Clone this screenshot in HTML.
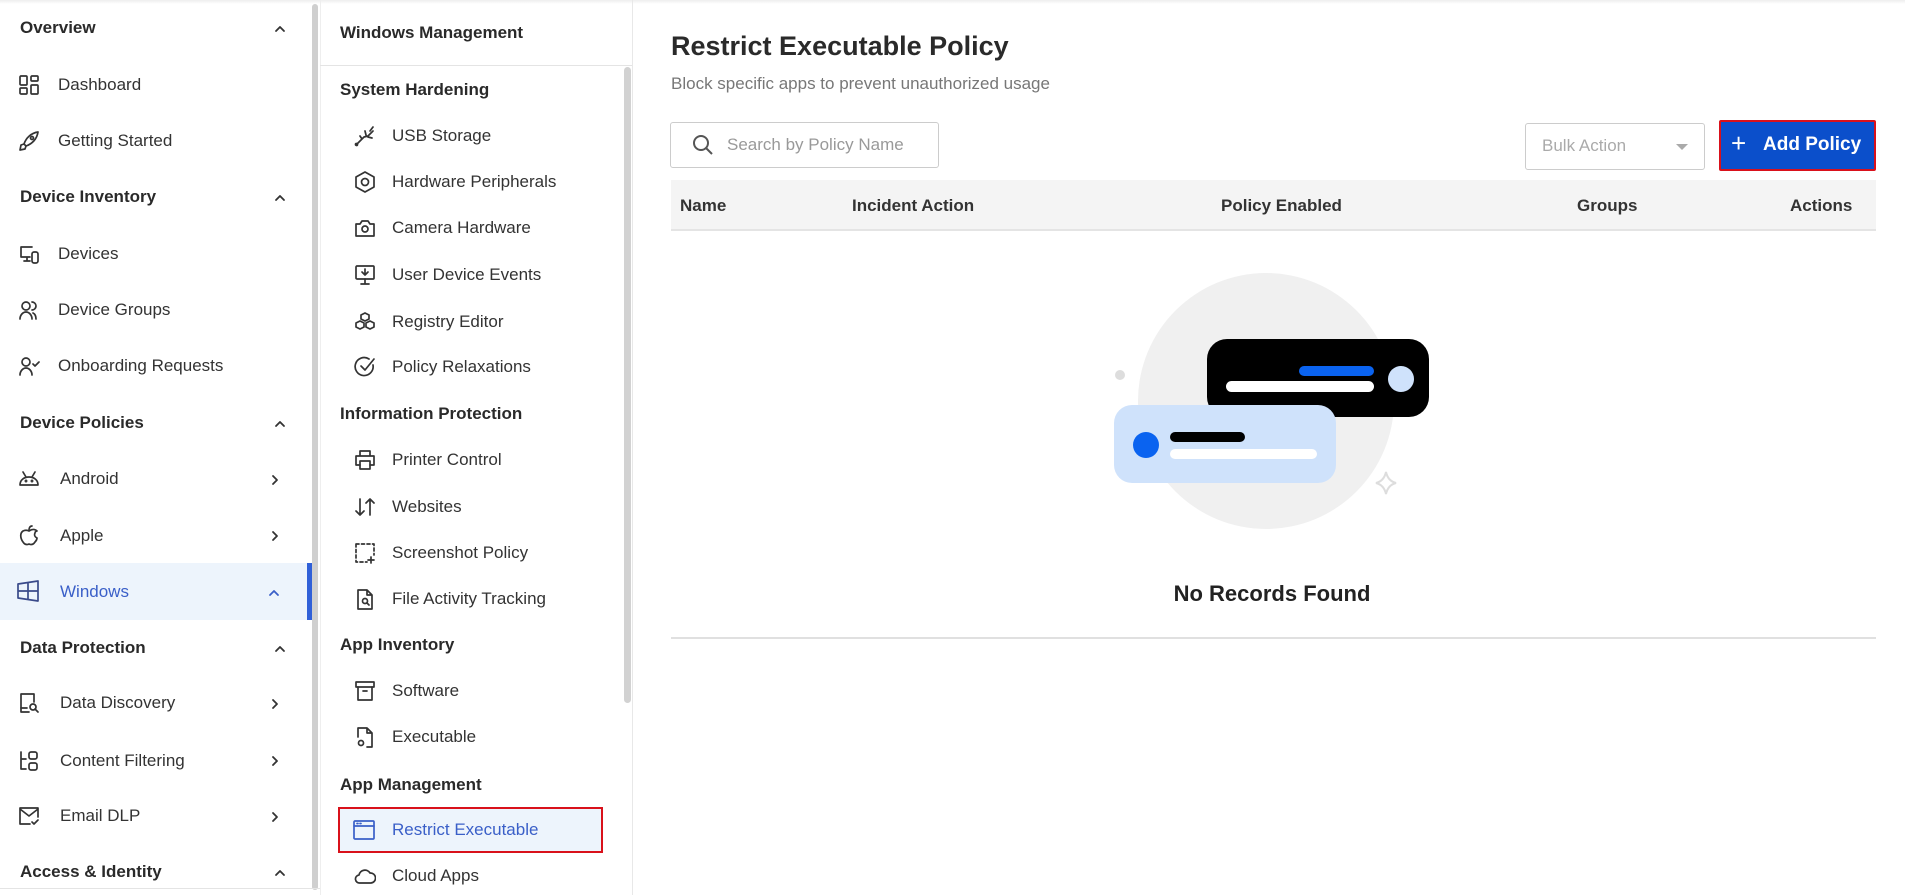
<!DOCTYPE html>
<html><head><meta charset="utf-8"><style>
*{margin:0;padding:0;box-sizing:border-box}
body{width:1905px;height:895px;overflow:hidden;background:#fff;font-family:"Liberation Sans",sans-serif;color:#222;position:relative}
.a{position:absolute;white-space:nowrap}
.sec{font-size:17px;font-weight:bold;color:#2a2a2a}
.it{font-size:17px;color:#333}
.ic{position:absolute;width:22px;height:22px}
.ic svg{width:22px;height:22px;fill:none;stroke:#333;stroke-width:1.7;stroke-linecap:round;stroke-linejoin:round}
.chev{position:absolute;width:12px;height:12px}
.chev svg{width:12px;height:12px;fill:none;stroke:#333;stroke-width:1.8;stroke-linecap:round;stroke-linejoin:round}
.th{position:absolute;top:196px;font-size:17px;font-weight:bold;color:#333}
</style></head><body>
<div class="a" style="left:0;top:0;width:1905px;height:4px;background:linear-gradient(#eee,#fff)"></div>
<!-- left sidebar -->
<div class="a" style="left:312px;top:4px;width:6px;height:886px;background:#cfcfcf;border-radius:3px"></div>
<div class="a" style="left:0;top:563px;width:312px;height:57px;background:#edf4fc"></div>
<div class="a" style="left:307px;top:563px;width:5px;height:57px;background:#3060d8"></div>
<div class="a" style="left:0;top:888px;width:320px;height:1px;background:#e4e4e4"></div>

<div class="a sec" style="left:20px;top:18px">Overview</div>
<div class="chev" style="left:274px;top:22px"><svg viewBox="0 0 12 12"><path d="M2 8L6 4L10 8"/></svg></div>
<div class="ic" style="left:18px;top:74px"><svg viewBox="0 0 22 22"><rect x="2" y="2" width="7" height="9" rx="1"/><rect x="13" y="2" width="7" height="5" rx="1"/><rect x="2" y="14" width="7" height="6" rx="1"/><rect x="13" y="11" width="7" height="9" rx="1"/></svg></div>
<div class="a it" style="left:58px;top:75px">Dashboard</div>
<div class="ic" style="left:18px;top:130px"><svg viewBox="0 0 22 22"><path d="M20 2C13 3 8 8 6 14l2 2c6-2 11-7 12-14z"/><path d="M6 14l-3 1-1 5 5-1 1-3"/><circle cx="14" cy="8" r="1.5"/></svg></div>
<div class="a it" style="left:58px;top:131px">Getting Started</div>
<div class="a sec" style="left:20px;top:187px">Device Inventory</div>
<div class="chev" style="left:274px;top:191px"><svg viewBox="0 0 12 12"><path d="M2 8L6 4L10 8"/></svg></div>
<div class="ic" style="left:18px;top:243px"><svg viewBox="0 0 22 22"><path d="M14 4H3v10h9M6 18h6M9 14v4"/><rect x="14" y="9" width="6" height="11" rx="2"/></svg></div>
<div class="a it" style="left:58px;top:244px">Devices</div>
<div class="ic" style="left:18px;top:299px"><svg viewBox="0 0 22 22"><circle cx="8" cy="7" r="4"/><path d="M2 20c0-4 3-7 6-7s6 3 6 7M14 3a4 4 0 010 8M18 20c0-3-1-5-3-6"/></svg></div>
<div class="a it" style="left:58px;top:300px">Device Groups</div>
<div class="ic" style="left:18px;top:355px"><svg viewBox="0 0 22 22"><circle cx="8" cy="7" r="4"/><path d="M2 20c0-4 3-7 6-7s6 3 6 7M15 9l2 2 4-4"/></svg></div>
<div class="a it" style="left:58px;top:356px">Onboarding Requests</div>
<div class="a sec" style="left:20px;top:413px">Device Policies</div>
<div class="chev" style="left:274px;top:417px"><svg viewBox="0 0 12 12"><path d="M2 8L6 4L10 8"/></svg></div>
<div class="ic" style="left:18px;top:468px"><svg viewBox="0 0 22 22"><path d="M2 17c0-5 4-8 9-8s9 3 9 8zM5 4l3 5M17 4l-3 5"/><circle cx="8" cy="13" r=".6"/><circle cx="14" cy="13" r=".6"/></svg></div>
<div class="a it" style="left:60px;top:469px">Android</div>
<div class="chev" style="left:269px;top:473px"><svg viewBox="0 0 12 12"><path d="M4 2L8 6L4 10"/></svg></div>
<div class="ic" style="left:18px;top:524px"><svg viewBox="0 0 22 22"><path d="M11 7c-2-1-4-1-6 0-3 2-3 7 0 11 2 3 4 3 6 2 2 1 4 1 6-2 1-1 2-3 2-4-2-1-3-3-2-5 0-1 1-2 2-2-2-2-5-2-8 0z"/><path d="M11 6c0-2 1-4 3-4"/></svg></div>
<div class="a it" style="left:60px;top:526px">Apple</div>
<div class="chev" style="left:269px;top:529px"><svg viewBox="0 0 12 12"><path d="M4 2L8 6L4 10"/></svg></div>
<div class="ic" style="left:17px;top:580px"><svg viewBox="0 0 22 22" style="stroke:#3a4a8a"><path d="M1 4l20-3v20L1 18zM11 2.5v17M1 11h20"/></svg></div>
<div class="a it" style="left:60px;top:582px;color:#3a5fc8">Windows</div>
<div class="chev" style="left:268px;top:586px"><svg viewBox="0 0 12 12" style="stroke:#3a5fc8"><path d="M2 8L6 4L10 8"/></svg></div>
<div class="a sec" style="left:20px;top:638px">Data Protection</div>
<div class="chev" style="left:274px;top:642px"><svg viewBox="0 0 12 12"><path d="M2 8L6 4L10 8"/></svg></div>
<div class="ic" style="left:18px;top:692px"><svg viewBox="0 0 22 22"><path d="M11 20H3V2h13v8"/><circle cx="15" cy="15" r="3"/><path d="M17 17l3 3M3 16h6"/></svg></div>
<div class="a it" style="left:60px;top:693px">Data Discovery</div>
<div class="chev" style="left:269px;top:697px"><svg viewBox="0 0 12 12"><path d="M4 2L8 6L4 10"/></svg></div>
<div class="ic" style="left:18px;top:750px"><svg viewBox="0 0 22 22"><path d="M3 2v17h5M3 9h5"/><rect x="11" y="2" width="8" height="7" rx="2"/><rect x="11" y="13" width="8" height="7" rx="2"/></svg></div>
<div class="a it" style="left:60px;top:751px">Content Filtering</div>
<div class="chev" style="left:269px;top:754px"><svg viewBox="0 0 12 12"><path d="M4 2L8 6L4 10"/></svg></div>
<div class="ic" style="left:18px;top:805px"><svg viewBox="0 0 22 22"><path d="M12 19H2V3h18v9M2 4l9 7 9-7M14 17l2 2 4-4"/></svg></div>
<div class="a it" style="left:60px;top:806px">Email DLP</div>
<div class="chev" style="left:269px;top:810px"><svg viewBox="0 0 12 12"><path d="M4 2L8 6L4 10"/></svg></div>
<div class="a sec" style="left:20px;top:862px">Access &amp; Identity</div>
<div class="chev" style="left:274px;top:866px"><svg viewBox="0 0 12 12"><path d="M2 8L6 4L10 8"/></svg></div>

<!-- second panel -->
<div class="a" style="left:320px;top:0;width:1px;height:895px;background:#eee"></div>
<div class="a" style="left:632px;top:0;width:1px;height:895px;background:#e8e8e8"></div>
<div class="a" style="left:320px;top:65px;width:312px;height:1px;background:#e4e4e4"></div>
<div class="a" style="left:624px;top:67px;width:7px;height:636px;background:#d2d2d2;border-radius:4px"></div>
<div class="a sec" style="left:340px;top:23px">Windows Management</div>
<div class="a sec" style="left:340px;top:80px">System Hardening</div>
<div class="ic" style="left:354px;top:125px"><svg viewBox="0 0 22 22"><path d="M2 20l8-8 4-1 5-5M8 14l-2-3M12 10l-1-4M16 6l3-4M14 12l4 1"/><circle cx="2.5" cy="19.5" r="1"/></svg></div>
<div class="a it" style="left:392px;top:126px">USB Storage</div>
<div class="ic" style="left:354px;top:171px"><svg viewBox="0 0 22 22"><path d="M11 1l9 5v10l-9 5-9-5V6z"/><circle cx="11" cy="11" r="3.5"/></svg></div>
<div class="a it" style="left:392px;top:172px">Hardware Peripherals</div>
<div class="ic" style="left:354px;top:217px"><svg viewBox="0 0 22 22"><path d="M2 7h4l2-3h6l2 3h4v12H2z"/><circle cx="11" cy="12" r="3"/></svg></div>
<div class="a it" style="left:392px;top:218px">Camera Hardware</div>
<div class="ic" style="left:354px;top:264px"><svg viewBox="0 0 22 22"><rect x="2" y="2" width="18" height="13" rx="1"/><path d="M11 5v6M8 8l3 3 3-3M11 15v5M7 20h8"/></svg></div>
<div class="a it" style="left:392px;top:265px">User Device Events</div>
<div class="ic" style="left:354px;top:311px"><svg viewBox="0 0 22 22"><path d="M11 2l4 2v4l-4 2-4-2V4zM6 10l4 2v4l-4 2-4-2v-4zM16 10l4 2v4l-4 2-4-2v-4z"/></svg></div>
<div class="a it" style="left:392px;top:312px">Registry Editor</div>
<div class="ic" style="left:354px;top:356px"><svg viewBox="0 0 22 22"><path d="M19 9a9 9 0 11-4-6"/><path d="M7 10l4 4 9-11"/></svg></div>
<div class="a it" style="left:392px;top:357px">Policy Relaxations</div>
<div class="a sec" style="left:340px;top:404px">Information Protection</div>
<div class="ic" style="left:354px;top:449px"><svg viewBox="0 0 22 22"><path d="M6 7V2h10v5M6 16H2V7h18v9h-4"/><rect x="6" y="12" width="10" height="8"/></svg></div>
<div class="a it" style="left:392px;top:450px">Printer Control</div>
<div class="ic" style="left:354px;top:496px"><svg viewBox="0 0 22 22"><path d="M6 3v16M2 15l4 4 4-4M16 19V3M12 7l4-4 4 4"/></svg></div>
<div class="a it" style="left:392px;top:497px">Websites</div>
<div class="ic" style="left:354px;top:542px"><svg viewBox="0 0 22 22" style="stroke-dasharray:3 2.5"><path d="M2 2h18v11M2 2v18h11"/></svg><svg viewBox="0 0 22 22" style="position:absolute;left:0;top:0"><path d="M17 15v6M14 18h6"/></svg></div>
<div class="a it" style="left:392px;top:543px">Screenshot Policy</div>
<div class="ic" style="left:354px;top:588px"><svg viewBox="0 0 22 22"><path d="M13 2H4v19h14V7zM13 2v5h5"/><circle cx="11" cy="13" r="2.5"/><path d="M13 15l2 2"/></svg></div>
<div class="a it" style="left:392px;top:589px">File Activity Tracking</div>
<div class="a sec" style="left:340px;top:635px">App Inventory</div>
<div class="ic" style="left:354px;top:680px"><svg viewBox="0 0 22 22"><rect x="2" y="2" width="18" height="5"/><path d="M4 7v13h14V7M9 11h4"/></svg></div>
<div class="a it" style="left:392px;top:681px">Software</div>
<div class="ic" style="left:354px;top:726px"><svg viewBox="0 0 22 22"><path d="M4 11V2h9l5 5v14h-5M13 2v5h5"/><circle cx="7" cy="17" r="2.5"/></svg></div>
<div class="a it" style="left:392px;top:727px">Executable</div>
<div class="a sec" style="left:340px;top:775px">App Management</div>
<div class="a" style="left:338px;top:807px;width:265px;height:46px;background:#edf4fc;border:2px solid #d9111b"></div>
<div class="ic" style="left:353px;top:819px"><svg viewBox="0 0 22 22" style="stroke:#3a5fc8"><rect x="1" y="2" width="20" height="18" rx="1"/><path d="M1 7h20M4 4.5h1M7 4.5h1"/></svg></div>
<div class="a it" style="left:392px;top:820px;color:#3a5fc8">Restrict Executable</div>
<div class="ic" style="left:354px;top:865px"><svg viewBox="0 0 22 22"><path d="M6 18a4 4 0 01-1-8 6 6 0 0111-2 5 5 0 011 10z"/></svg></div>
<div class="a it" style="left:392px;top:866px">Cloud Apps</div>

<!-- main -->
<div class="a" style="left:671px;top:31px;font-size:27px;font-weight:bold;color:#2a2a2a">Restrict Executable Policy</div>
<div class="a" style="left:671px;top:74px;font-size:17px;color:#777">Block specific apps to prevent unauthorized usage</div>
<div class="a" style="left:670px;top:122px;width:269px;height:46px;border:1px solid #ccc;border-radius:3px"></div>
<svg class="a" style="left:690px;top:132px" width="26" height="26" viewBox="0 0 26 26" fill="none" stroke="#555" stroke-width="2"><circle cx="11" cy="11" r="7"/><path d="M16 16l6 6"/></svg>
<div class="a" style="left:727px;top:135px;font-size:17px;color:#999">Search by Policy Name</div>
<div class="a" style="left:1525px;top:123px;width:180px;height:47px;border:1px solid #ccc;border-radius:3px"></div>
<div class="a" style="left:1542px;top:136px;font-size:17px;color:#aaa">Bulk Action</div>
<div class="a" style="left:1676px;top:144px;width:0;height:0;border-left:6px solid transparent;border-right:6px solid transparent;border-top:6px solid #aaa"></div>
<div class="a" style="left:1719px;top:120px;width:157px;height:51px;background:#0b4fcb;border:2px solid #d9111b;border-radius:2px"></div>
<div class="a" style="left:1731px;top:128px;font-size:26px;color:#fff;font-weight:300">+</div>
<div class="a" style="left:1763px;top:134px;font-size:19px;color:#fff;font-weight:bold">Add Policy</div>
<div class="a" style="left:671px;top:180px;width:1205px;height:51px;background:#f4f4f4;border-bottom:2px solid #e4e4e4"></div>
<div class="th" style="left:680px">Name</div>
<div class="th" style="left:852px">Incident Action</div>
<div class="th" style="left:1221px">Policy Enabled</div>
<div class="th" style="left:1577px">Groups</div>
<div class="th" style="left:1790px">Actions</div>

<svg class="a" style="left:1100px;top:260px" width="360" height="280" viewBox="1100 260 360 280">
<circle cx="1266" cy="401" r="128" fill="#f0f0f0"/>
<circle cx="1120" cy="375" r="5" fill="#ddd"/>
<rect x="1207" y="339" width="222" height="78" rx="20" fill="#000"/>
<rect x="1299" y="366" width="75" height="10" rx="5" fill="#0a63f0"/>
<rect x="1226" y="381" width="148" height="11" rx="5.5" fill="#fff"/>
<circle cx="1401" cy="379" r="13" fill="#cfe2fb"/>
<rect x="1114" y="405" width="222" height="78" rx="18" fill="#cfe2fb"/>
<circle cx="1146" cy="445" r="13" fill="#0a63f0"/>
<rect x="1170" y="432" width="75" height="10" rx="5" fill="#000"/>
<rect x="1170" y="449" width="147" height="10" rx="5" fill="#fff"/>
<path d="M1386 472q2 9 10 11q-8 2-10 11q-2-9-10-11q8-2 10-11z" fill="none" stroke="#ddd" stroke-width="2"/>
</svg>
<div class="a" style="left:1172px;top:581px;width:200px;text-align:center;font-size:22px;font-weight:bold;color:#222">No Records Found</div>
<div class="a" style="left:671px;top:637px;width:1205px;height:2px;background:#e0e0e0"></div>
</body></html>
